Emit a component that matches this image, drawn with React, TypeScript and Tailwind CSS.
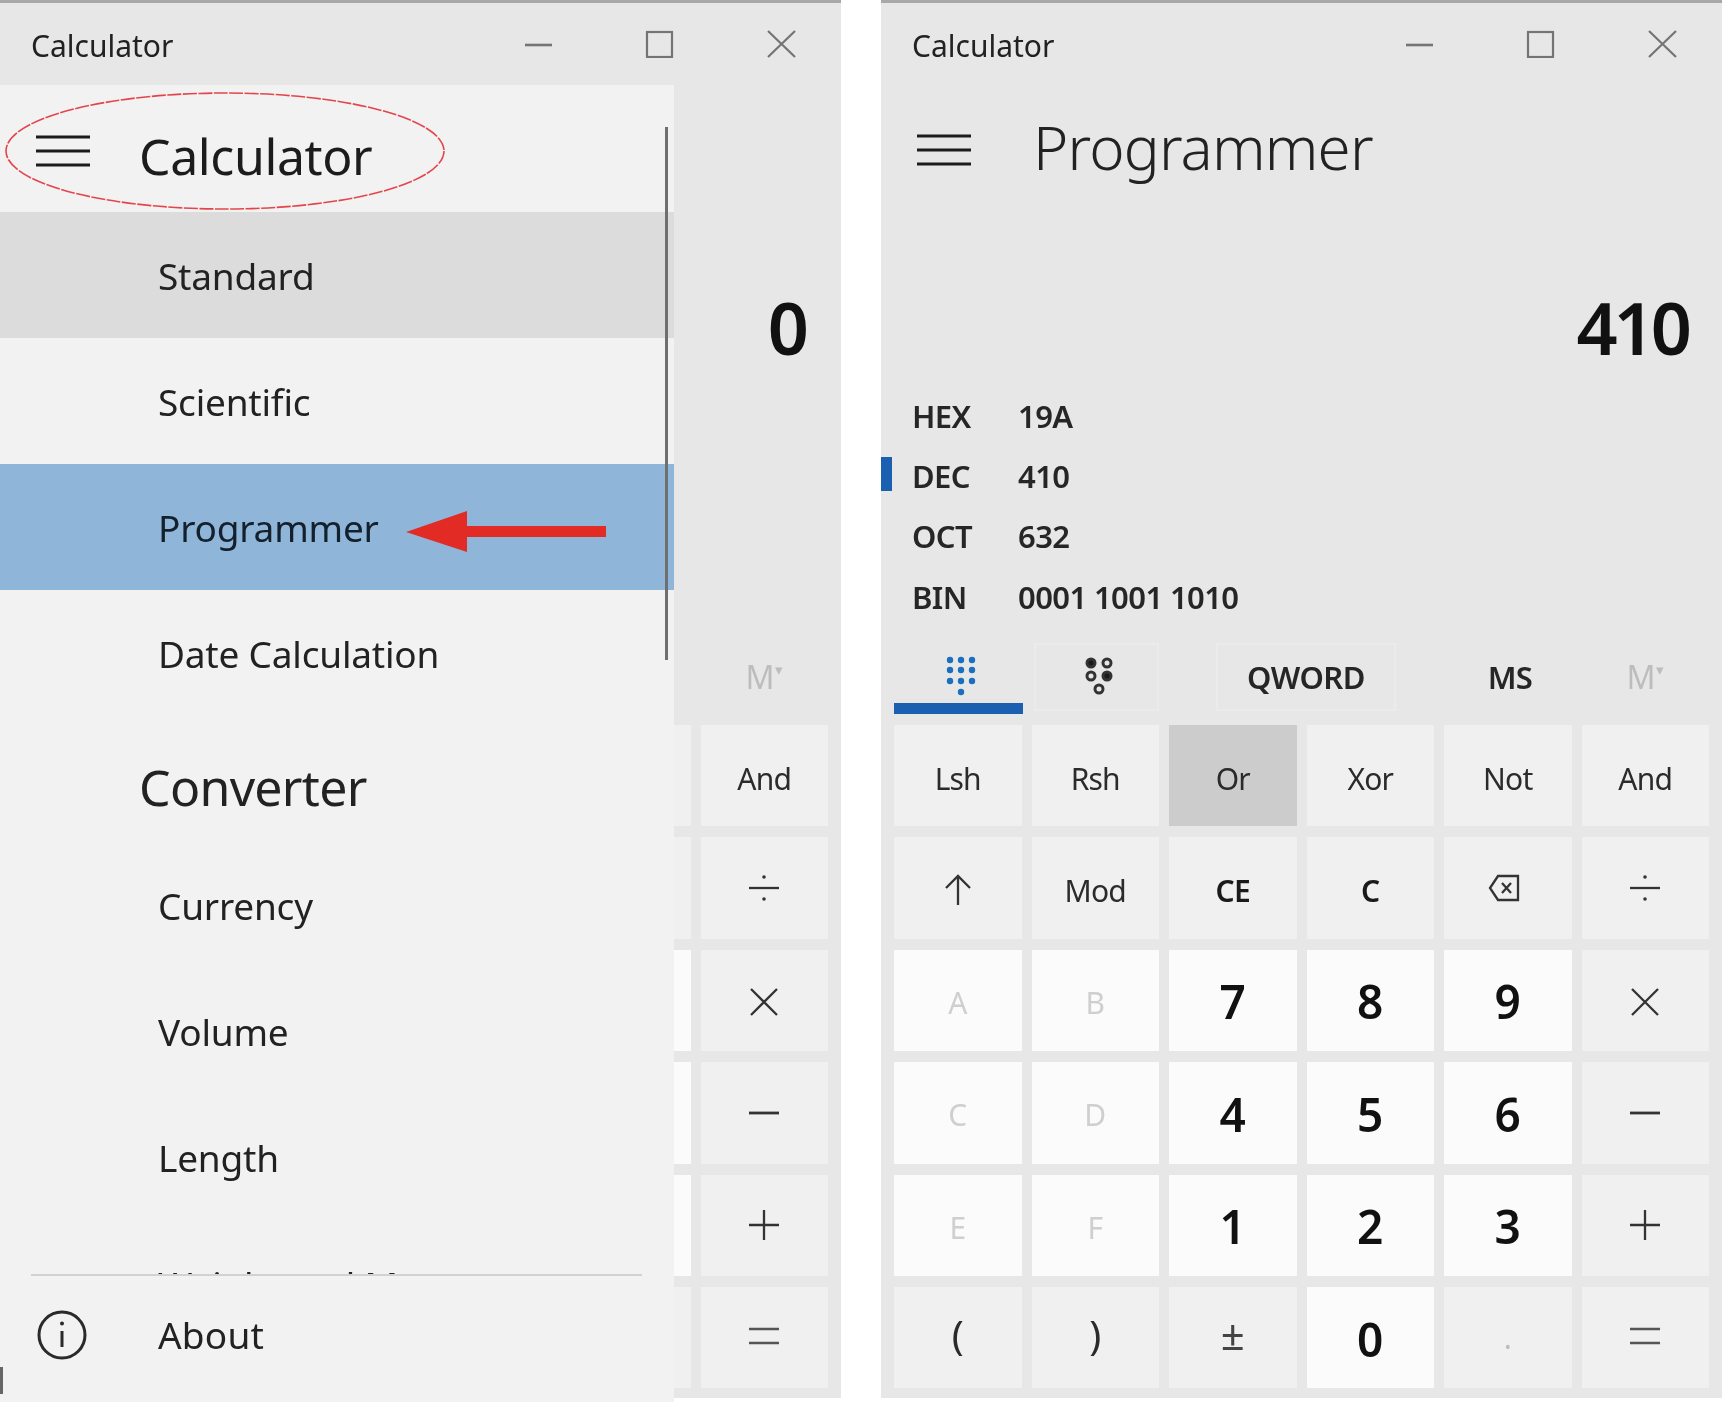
const font = { fontFamily: '"Noto Sans", sans-serif' };

function Hamburger() {
  return (
    <svg width="54" height="32" viewBox="0 0 54 32" className="block">
      <path d="M0 2H54M0 16H54M0 30H54" stroke="#1c1c1c" strokeWidth="3" />
    </svg>
  );
}

function TitleBar() {
  return (
    <div className="relative h-[82px] shrink-0 flex items-center pl-[31px] pt-1 text-[30px] text-[#222]">
      <span className="-mt-[1px]">Calculator</span>
      <div className="ml-auto flex items-center -mt-[4px]">
        <svg width="300" height="28" viewBox="0 0 300 28" className="mr-[16px] block" fill="none" stroke="#747474" strokeWidth="2.2">
          <path d="M0 15H27" strokeWidth="2.6" />
          <rect x="122" y="2" width="25" height="25" />
          <path d="M243 1L270 27M270 1L243 27" />
        </svg>
      </div>
    </div>
  );
}

type Icon = 'div' | 'times' | 'minus' | 'plus' | 'eq' | 'up' | 'back';

function KeyIcon({ name }: { name: Icon }) {
  const paths: Record<Icon, JSX.Element> = {
    div: (
      <>
        <path d="M1 16H31" />
        <circle cx="16" cy="5" r="1.8" fill="#333" stroke="none" />
        <circle cx="16" cy="27" r="1.8" fill="#333" stroke="none" />
      </>
    ),
    times: <path d="M3 5L29 31M29 5L3 31" />,
    minus: <path d="M1 16H31" strokeWidth="2.8" />,
    plus: <path d="M1 16H31M16 1V31" />,
    eq: <path d="M1 7H31M1 21H31" strokeWidth="2.6" stroke="#555" />,
    up: <path d="M16 33V4M4 16L16 4L28 16" />,
    back: <path d="M6 4H26V28H6L-2 16ZM10 11L19 21M19 11L10 21" />,
  };
  return (
    <svg width="32" height="32" viewBox="0 0 32 32" fill="none" stroke="#333" strokeWidth="2.3" className="block overflow-visible">
      {paths[name]}
    </svg>
  );
}

type Key = { t?: string; i?: Icon; k: 'op' | 'icon' | 'num' | 'dim' | 'strong' | 'on' | 'dimop' | 'paren' | 'pm' };

const keys: Key[] = [
  { t: 'Lsh', k: 'op' }, { t: 'Rsh', k: 'op' }, { t: 'Or', k: 'on' }, { t: 'Xor', k: 'op' }, { t: 'Not', k: 'op' }, { t: 'And', k: 'op' },
  { i: 'up', k: 'icon' }, { t: 'Mod', k: 'op' }, { t: 'CE', k: 'strong' }, { t: 'C', k: 'strong' }, { i: 'back', k: 'icon' }, { i: 'div', k: 'icon' },
  { t: 'A', k: 'dim' }, { t: 'B', k: 'dim' }, { t: '7', k: 'num' }, { t: '8', k: 'num' }, { t: '9', k: 'num' }, { i: 'times', k: 'icon' },
  { t: 'C', k: 'dim' }, { t: 'D', k: 'dim' }, { t: '4', k: 'num' }, { t: '5', k: 'num' }, { t: '6', k: 'num' }, { i: 'minus', k: 'icon' },
  { t: 'E', k: 'dim' }, { t: 'F', k: 'dim' }, { t: '1', k: 'num' }, { t: '2', k: 'num' }, { t: '3', k: 'num' }, { i: 'plus', k: 'icon' },
  { t: '(', k: 'paren' }, { t: ')', k: 'paren' }, { t: '±', k: 'pm' }, { t: '0', k: 'num' }, { t: '.', k: 'dimop' }, { i: 'eq', k: 'icon' },
];

const keyClass: Record<Key['k'], string> = {
  icon: 'bg-[#f0f0f0]',
  op: 'bg-[#f0f0f0] text-[#2b2b2b] text-[30px] tracking-[-0.8px] pt-[5px]',
  paren: 'bg-[#f0f0f0] text-[#2b2b2b] text-[40px] pb-[5px]',
  pm: 'bg-[#f0f0f0] text-[#444] text-[42px] pb-[9px]',
  strong: 'bg-[#f0f0f0] text-[#1a1a1a] text-[30px] font-semibold tracking-[-0.8px] pt-[5px]',
  on: 'bg-[#cccccc] text-[#2b2b2b] text-[30px] tracking-[-0.8px] pt-[5px]',
  num: 'bg-[#fbfbfb] text-[#111] text-[46px] font-semibold pt-[3px]',
  dim: 'bg-[#fbfbfb] text-[#cfcfcf] text-[30px] pt-[4px]',
  dimop: 'bg-[#f0f0f0] text-[#bdbdbd] text-[30px]',
};

function Keypad({ covered }: { covered?: boolean }) {
  return (
    <div className="grid grid-cols-6 grid-rows-[repeat(6,101.4px)] gap-x-[10px] gap-y-[11px] px-[13px]">
      {keys.map((key, n) => {
        const hide = covered && n % 6 !== 5;
        return (
          <div key={n} className={`flex items-center justify-center ${keyClass[key.k]}`}>
            {hide ? null : key.i ? <KeyIcon name={key.i} /> : key.t}
          </div>
        );
      })}
    </div>
  );
}

function Radix({ label, value, active }: { label: string; value: string; active?: boolean }) {
  return (
    <div className="relative h-[60.3px] flex items-center text-[31px] font-semibold text-[#262626] tracking-[-0.6px]">
      {active && <div className="absolute left-0 top-[11px] w-[11px] h-[34px] bg-[#1a5fb0]" />}
      <span className="pl-[31px] w-[137px]">{label}</span>
      <span>{value}</span>
    </div>
  );
}

function Calc({ value, covered }: { value: string; covered?: boolean }) {
  return (
    <div className="relative w-[841px] h-[1398px] shrink-0 bg-[#e7e7e7] border-t-[3px] border-[#a8a8a8] overflow-hidden">
      <TitleBar />
      <div className="h-[130px] flex items-center pl-[36px]">
        {!covered && (
          <>
            <Hamburger />
            <span className="ml-[62px] text-[60px] text-[#222] font-light tracking-[-0.8px] -mt-[6px]">Programmer</span>
          </>
        )}
      </div>
      <div className={`h-[171px] flex justify-end items-center pt-[53px] text-[72px] font-semibold text-[#111] tracking-[-4px] ${covered ? 'pr-[36px]' : 'pr-[34px]'}`}>
        {value}
      </div>
      <div className="h-[241px]">
        {!covered && (
          <>
            <Radix label="HEX" value="19A" />
            <Radix label="DEC" value="410" active />
            <Radix label="OCT" value="632" />
            <Radix label="BIN" value="0001 1001 1010" />
          </>
        )}
      </div>
      <div className="h-[87px] flex items-end mb-[11px]">
        {covered ? (
          <div className="w-[743px]" />
        ) : (
          <>
            <div className="ml-[13px] w-[129px] h-[71px] flex flex-col items-center pt-[13px] border-b-[11px] border-[#1a5fb0]">
              <svg width="32" height="42" viewBox="0 0 32 42" fill="#1a6fbf" className="ml-[4px]">
                {[5, 16, 27].map((x) => [4, 14, 25].map((y) => <circle key={`${x}${y}`} cx={x} cy={y} r="3.2" />))}
                <circle cx="16" cy="36" r="3.2" />
              </svg>
            </div>
            <div className="ml-[11px] w-[125px] h-[68px] mb-[3px] flex items-center justify-center border-2 border-[#ebebeb]">
              <svg width="34" height="44" viewBox="0 0 34 44" fill="#1a1a1a" stroke="#333" strokeWidth="3" className="ml-[4px]">
                <circle cx="9" cy="8" r="4" />
                <circle cx="25" cy="8" r="4" fill="#e7e7e7" />
                <circle cx="9" cy="21" r="4" fill="#e7e7e7" />
                <circle cx="25" cy="21" r="4" />
                <circle cx="17" cy="34" r="4" fill="#e7e7e7" />
              </svg>
            </div>
            <div className="ml-[57px] w-[180px] h-[68px] mb-[3px] flex items-center justify-center border-2 border-[#ebebeb] text-[31px] font-semibold text-[#262626] tracking-[-0.5px]">
              QWORD
            </div>
            <div className="w-[228px] h-[68px] mb-[3px] flex items-center justify-center text-[31px] font-semibold text-[#262626] tracking-[-0.6px]">
              MS
            </div>
          </>
        )}
        <div className="w-[42px] h-[68px] mb-[3px] flex items-center justify-center text-[32px] text-[#bdbdbd] whitespace-nowrap">
          M<span className="text-[15px] -mt-4">▾</span>
        </div>
      </div>
      <Keypad covered={covered} />
    </div>
  );
}

const rowText = 'flex items-center pl-[158px] pt-[2px] text-[37px] text-[#222] tracking-[-0.2px]';
const headText = 'flex items-center pl-[139px] pt-[16px] text-[50px] text-[#222] tracking-[-0.7px]';

function Flyout() {
  return (
    <div className="absolute left-0 top-[85px] bottom-0 w-[674px] bg-[#f2f2f2] flex flex-col">
      <div className="h-[127px] shrink-0 relative flex items-center">
        <div className="ml-[36px] mt-[4px]"><Hamburger /></div>
        <span className="ml-[49px] text-[50px] text-[#1c1c1c] tracking-[-0.4px] mt-[16px]">Calculator</span>
      </div>
      <div className="h-[1062px] shrink-0 overflow-hidden flex flex-col">
        <div className={`h-[126px] shrink-0 bg-[#dcdcdc] ${rowText}`}>Standard</div>
        <div className={`h-[126px] shrink-0 ${rowText}`}>Scientific</div>
        <div className={`h-[126px] shrink-0 bg-[#8fb6d9] ${rowText} text-[#14202c]`}>Programmer</div>
        <div className={`h-[126px] shrink-0 ${rowText}`}>Date Calculation</div>
        <div className={`h-[126px] shrink-0 ${headText}`}>Converter</div>
        <div className={`h-[126px] shrink-0 ${rowText}`}>Currency</div>
        <div className={`h-[126px] shrink-0 ${rowText}`}>Volume</div>
        <div className={`h-[126px] shrink-0 ${rowText}`}>Length</div>
        <div className="h-[126px] shrink-0 flex items-center pl-[158px] pt-[4px] text-[37px] text-[#222] tracking-[-0.2px]">Weight and Mass</div>
      </div>
      <div className="mx-[31px] w-[611px] h-[2px] bg-[#d2d2d2] shrink-0" />
      <div className="flex-1 flex items-center pl-[37px] pb-[8px]">
        <svg width="50" height="50" viewBox="0 0 50 50" fill="none" stroke="#2a2a2a" strokeWidth="3">
          <circle cx="25" cy="25" r="23" />
          <path d="M25 21V37" />
          <circle cx="25" cy="13.5" r="2" fill="#2a2a2a" stroke="none" />
        </svg>
        <span className="ml-[71px] text-[37px] text-[#222] tracking-[0.2px]">About</span>
      </div>
      <div className="absolute left-[665px] top-[42px] w-[3px] h-[533px] bg-[#6f6f6f]" />
      <svg width="440" height="120" viewBox="0 0 440 120" fill="none" className="absolute left-[5px] top-[6px]">
        <ellipse cx="220" cy="60" rx="219" ry="58" stroke="#e4454c" strokeWidth="1.6" strokeDasharray="14 1.5" />
      </svg>
      <svg width="201" height="42" viewBox="0 0 201 42" className="absolute left-[406px] top-[426px]">
        <path d="M0 21L61 0V15H200V26H61V41Z" fill="#e32b26" />
      </svg>
      <div className="absolute left-0 bottom-[8px] w-[3px] h-[27px] bg-[#666]" />
    </div>
  );
}

export default function App() {
  return (
    <div className="w-[1725px] h-[1402px] bg-white flex gap-[40px] overflow-hidden blur-[0.6px]" style={font}>
      <div className="relative">
        <Calc value="0" covered />
        <Flyout />
      </div>
      <Calc value="410" />
    </div>
  );
}
